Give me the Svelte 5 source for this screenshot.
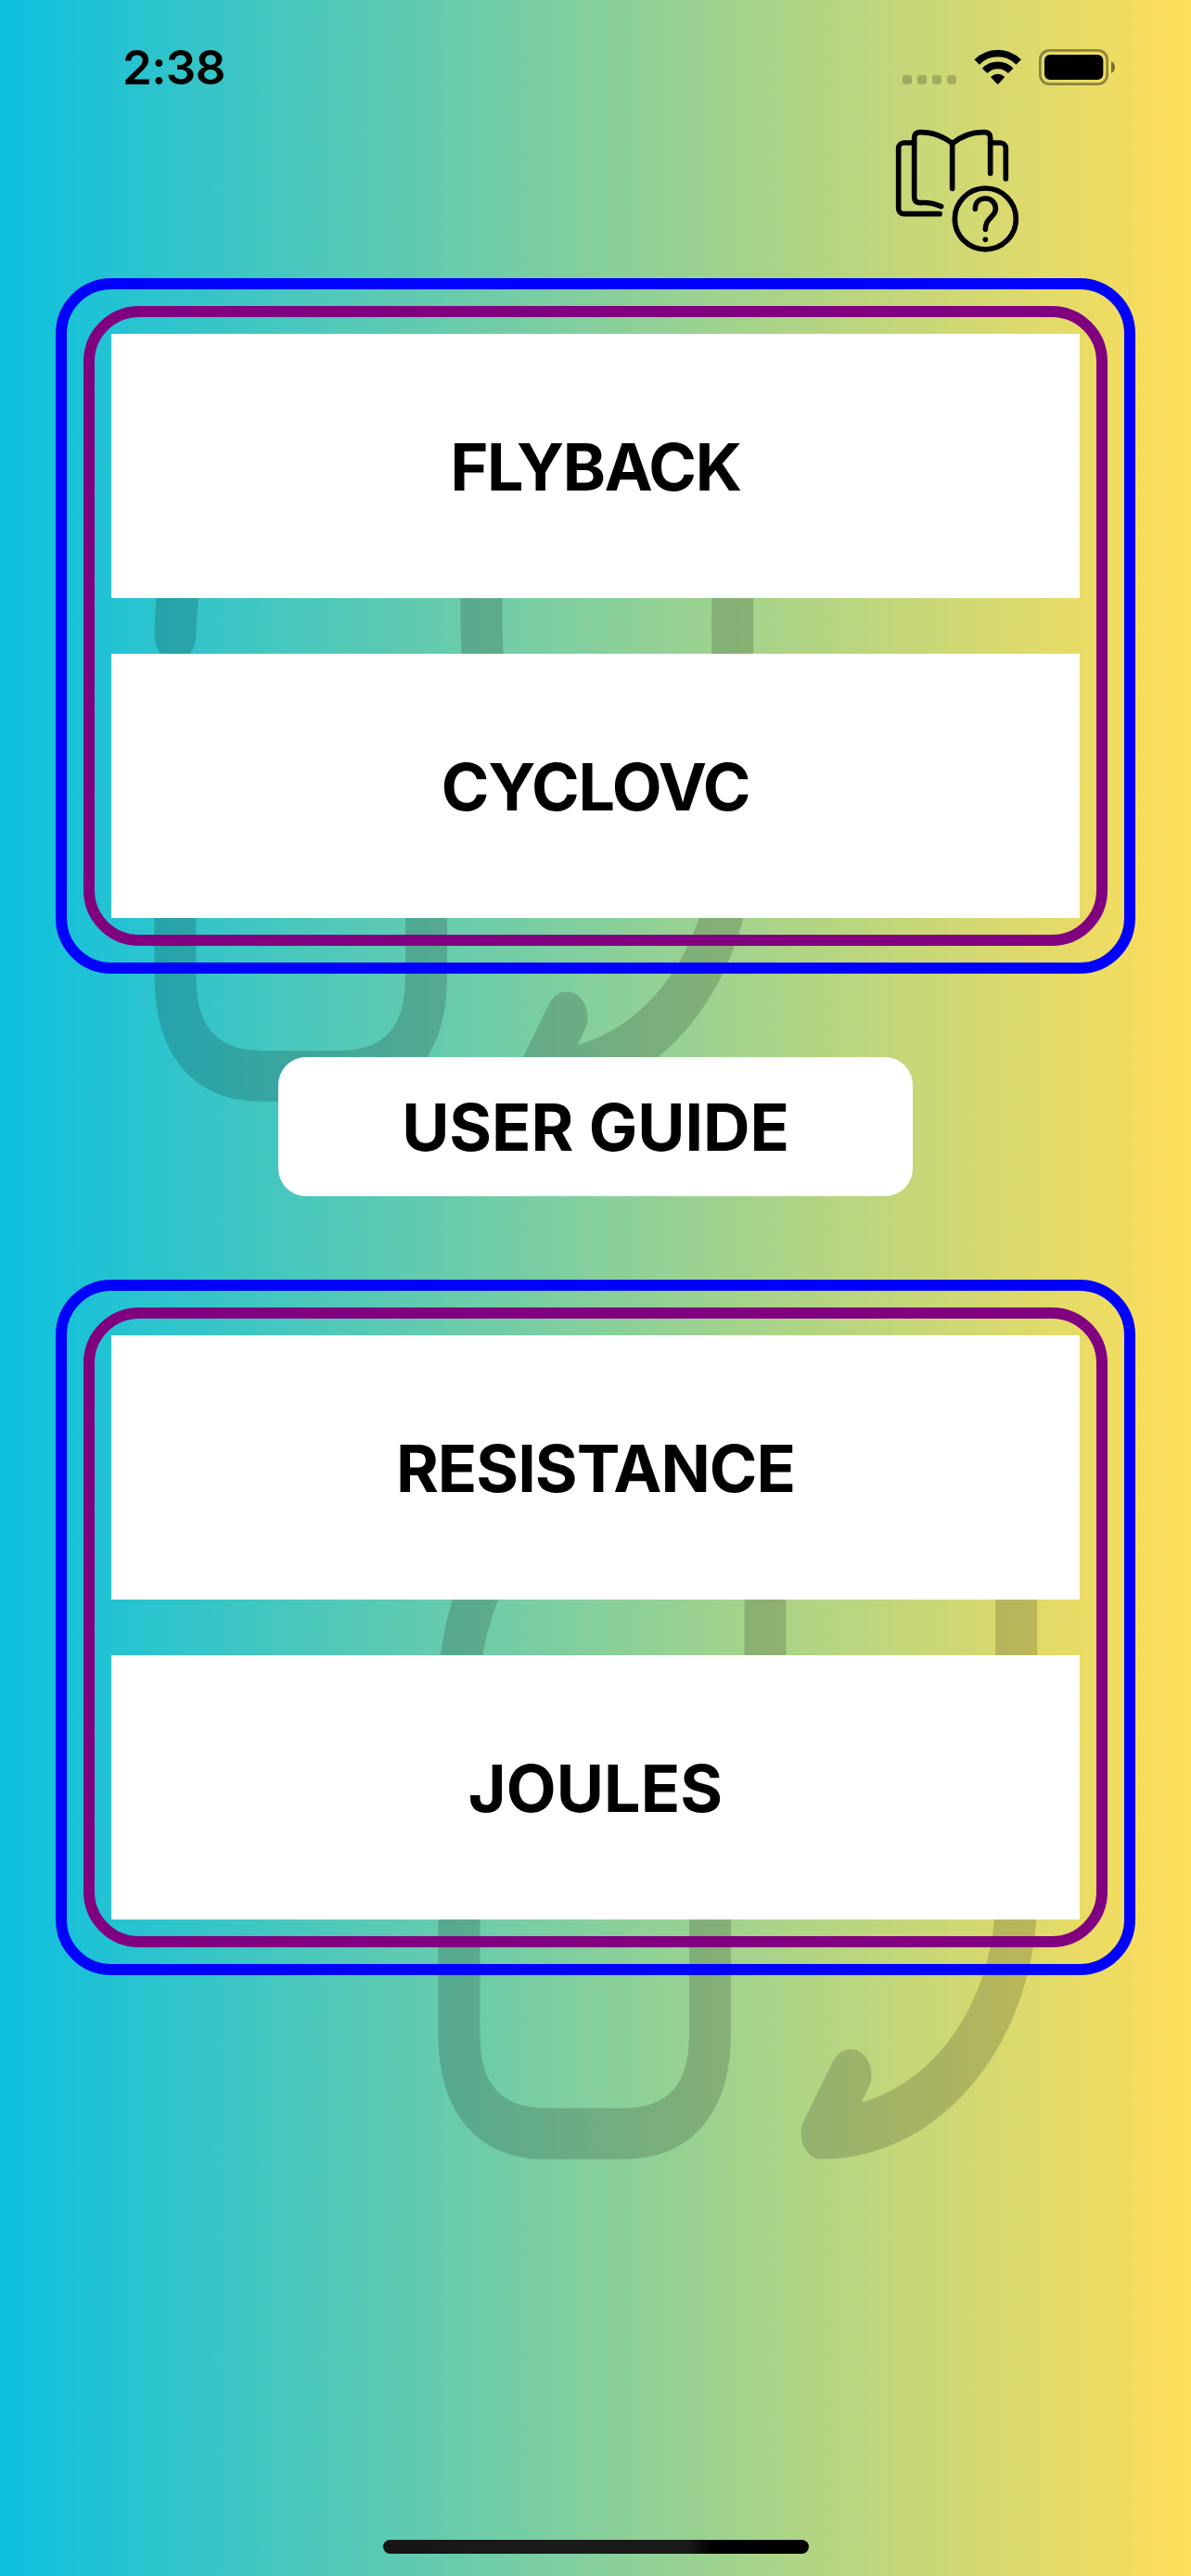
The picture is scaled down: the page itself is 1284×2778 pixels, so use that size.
<script>
  // tracking is the letter-spacing of each label, in pixels
  const topCards = [
    { label: 'FLYBACK', tracking: -1.5 },
    { label: 'CYCLOVC', tracking: -1.3 }
  ];
  const bottomCards = [
    { label: 'RESISTANCE', tracking: -1 },
    { label: 'JOULES', tracking: 0.1 }
  ];
</script>

{#snippet group(items)}
  <section class="outer">
    <div class="inner">
      {#each items as item}
        <button class="card"><span style:letter-spacing="{item.tracking}px">{item.label}</span></button>
      {/each}
    </div>
  </section>
{/snippet}

{#snippet mark()}
  <path d="M189 560.6A203 203 0 0 1 248 417.5" />
  <path d="M519 420V545Q519 565 521 590" />
  <path d="M189 690V861.7C189 921 224 949.7 282 949.7H366.5C424.5 949.7 459.5 921 459.5 861.7V690" />
  <path d="M611 897.7L580 949.7A209.7 209.7 0 0 0 789.7 740V420" />
{/snippet}

<main class="screen">
  <!-- faint watermark behind the cards -->
  <svg class="watermark" viewBox="0 0 1284 2778" aria-hidden="true">
    <g transform="scale(1 1.222)">{@render mark()}</g>
    <g transform="translate(306 1140.5) scale(1 1.222)">{@render mark()}</g>
  </svg>

  <header class="status">
    <span class="time">2:38</span>
    <svg class="indicators" viewBox="99 60 690 130" aria-hidden="true">
      <g opacity="0.2">
        <rect x="99" y="153" width="30" height="30" rx="9" />
        <rect x="147" y="153" width="30" height="30" rx="9" />
        <rect x="195" y="153" width="30" height="30" rx="9" />
        <rect x="243" y="153" width="30" height="30" rx="9" />
      </g>
      <g fill="none" stroke="#000" stroke-width="23">
        <path d="M339.500 111A94 94 0 0 1 474.500 111" />
        <path d="M365 139A58 58 0 0 1 449 139" />
      </g>
      <path d="M384 159Q407 139 430 159L410 181Q407 184 404 181Z" />
      <rect x="544" y="73" width="217" height="109" rx="30" fill="none" stroke="#000" stroke-width="8" opacity="0.4" />
      <rect x="558" y="87" width="190" height="81" rx="18" />
      <path d="M774 109Q786 114 786 128Q786 141 774 146Z" opacity="0.5" />
    </svg>
  </header>

  <nav class="toolbar">
    <svg class="guide" viewBox="75 324 405 405" role="img" aria-label="Guide">
      <g fill="none" stroke="#000" stroke-width="17" stroke-linecap="round" stroke-linejoin="round">
        <path d="M136 372H104A18 18 0 0 0 86 390V584A18 18 0 0 0 104 602H219" />
        <path d="M224 578Q190 563 155 566Q137 566 137 547V357Q137 340 153 338Q208 334 260 374V520" />
        <path d="M260 374Q310 334 367 338Q383 340 383 357V471" />
        <path d="M383 372H415A18 18 0 0 1 433 390V488" />
        <circle cx="367" cy="618" r="99" />
        <path d="M334 586C334 563 350 552 367 552C387 552 400 567 400 585C400 613 367 614 367 652" />
      </g>
      <circle cx="367" cy="685" r="8.500" />
    </svg>
  </nav>

  {@render group(topCards)}
  <button class="user-guide"><span>USER GUIDE</span></button>
  {@render group(bottomCards)}

  <div class="home"></div>
</main>

<style>
  :global(body) {
    margin: 0;
  }
  .screen {
    position: relative;
    isolation: isolate;
    box-sizing: border-box;
    width: 1284px;
    height: 2778px;
    display: flex;
    flex-direction: column;
    align-items: center;
    overflow: hidden;
    background: linear-gradient(90deg, #0cc0df, #ffde59);
    color: #000;
    font-family: Inter, 'Liberation Sans', sans-serif;
  }
  .watermark {
    position: absolute;
    inset: 0;
    z-index: -1;
    width: 1284px;
    height: 2778px;
    opacity: 0.16;
    fill: none;
    stroke: #000;
    stroke-width: 45;
    stroke-linecap: round;
    stroke-linejoin: round;
  }
  .status {
    box-sizing: border-box;
    width: 100%;
    height: 138px;
    padding: 50px 81px 0 132px;
    display: flex;
    justify-content: space-between;
    align-items: flex-start;
  }
  .time {
    font-size: 51px;
    font-weight: 600;
    line-height: 46px;
    letter-spacing: -0.6px;
  }
  .indicators {
    width: 230px;
    height: 43.333px;
  }
  .toolbar {
    box-sizing: border-box;
    width: 100%;
    height: 162px;
    padding-right: 184px;
    display: flex;
    justify-content: flex-end;
  }
  .guide {
    width: 135px;
    height: 135px;
  }
  .outer {
    box-sizing: border-box;
    width: 1164px;
    padding: 18px;
    border: 12px solid #00f;
    border-radius: 60px;
  }
  .inner {
    padding: 18px;
    border: 12px solid #800080;
    border-radius: 60px;
    display: flex;
    flex-direction: column;
    gap: 60px;
  }
  button {
    box-sizing: border-box;
    border: 0;
    padding: 2px 0 0;
    background: #fff;
    color: inherit;
    font: 700 70px / 84px Inter, 'Liberation Sans', sans-serif;
    display: flex;
    align-items: center;
    justify-content: center;
  }
  .card {
    height: 285px;
  }
  .user-guide {
    width: 684px;
    height: 150px;
    margin: 90px 0;
    border-radius: 30px;
    letter-spacing: -0.1px;
  }
  .home {
    width: 459px;
    height: 15px;
    margin: auto 0 24px;
    border-radius: 8px;
    background: linear-gradient(90deg, #151515, #1b1b1b 40%, #191919 72%, #000 77%);
  }
</style>
